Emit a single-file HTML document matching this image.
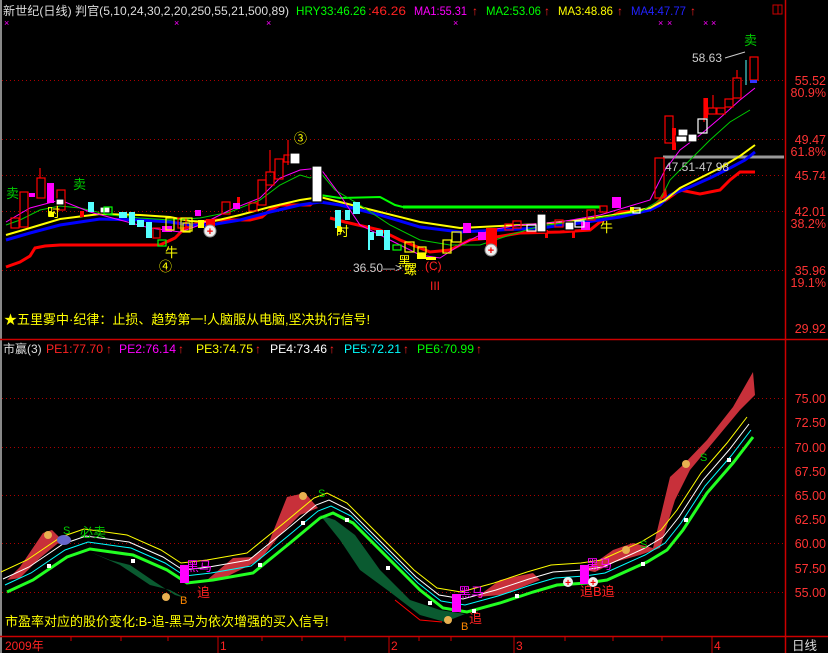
<!DOCTYPE html>
<html><head><meta charset="utf-8"><style>
html,body{margin:0;padding:0;background:#000;width:828px;height:653px;overflow:hidden}
svg{display:block}
text{font-family:"Liberation Sans","Noto Sans CJK SC",sans-serif}
</style></head><body>
<svg width="828" height="653" viewBox="0 0 828 653" xmlns="http://www.w3.org/2000/svg">
<rect width="828" height="653" fill="#000"/>
<rect x="0" y="0" width="2" height="653" fill="#888"/>
<line x1="785.5" y1="0" x2="785.5" y2="653" stroke="#c00" stroke-width="1.5"/>
<line x1="0" y1="339.5" x2="828" y2="339.5" stroke="#c00" stroke-width="1.5"/>
<line x1="0" y1="636.5" x2="828" y2="636.5" stroke="#c00" stroke-width="1.5"/>
<rect x="773" y="5" width="9" height="9" fill="none" stroke="#c00"/><line x1="778" y1="5" x2="778" y2="14" stroke="#c00"/>
<g stroke="#a00" stroke-dasharray="1,3" stroke-width="1">
<line x1="2" y1="80.5" x2="785" y2="80.5"/><line x1="2" y1="139.5" x2="785" y2="139.5"/>
<line x1="2" y1="175.5" x2="785" y2="175.5"/><line x1="2" y1="211.5" x2="785" y2="211.5"/>
<line x1="2" y1="270.5" x2="785" y2="270.5"/>
<line x1="2" y1="398.5" x2="785" y2="398.5"/><line x1="2" y1="447.5" x2="785" y2="447.5"/>
<line x1="2" y1="495.5" x2="785" y2="495.5"/><line x1="2" y1="543.5" x2="785" y2="543.5"/>
<line x1="2" y1="592.5" x2="785" y2="592.5"/>
</g>
<text x="3" y="15" font-size="12" fill="#ddd" textLength="286" lengthAdjust="spacingAndGlyphs">新世纪(日线) 判官(5,10,24,30,2,20,250,55,21,500,89)</text>
<text x="296" y="15" font-size="12" fill="#0f0" textLength="70" lengthAdjust="spacingAndGlyphs">HRY33:46.26</text>
<text x="368" y="15" font-size="12" fill="#f22" textLength="38" lengthAdjust="spacingAndGlyphs">:46.26</text>
<text x="414" y="15" font-size="12" fill="#f0f" textLength="53" lengthAdjust="spacingAndGlyphs">MA1:55.31</text><text x="472" y="15" font-size="12" fill="#f22">↑</text>
<text x="486" y="15" font-size="12" fill="#0f0" textLength="55" lengthAdjust="spacingAndGlyphs">MA2:53.06</text><text x="544" y="15" font-size="12" fill="#f22">↑</text>
<text x="558" y="15" font-size="12" fill="#ff0" textLength="55" lengthAdjust="spacingAndGlyphs">MA3:48.86</text><text x="617" y="15" font-size="12" fill="#f22">↑</text>
<text x="631" y="15" font-size="12" fill="#22f" textLength="55" lengthAdjust="spacingAndGlyphs">MA4:47.77</text><text x="690" y="15" font-size="12" fill="#f22">↑</text>
<g fill="#f0f" font-size="9"><text x="4" y="26">×</text><text x="174" y="26">×</text><text x="266" y="26">×</text><text x="453" y="26">×</text><text x="658" y="26">×</text><text x="667" y="26">×</text><text x="703" y="26">×</text><text x="711" y="26">×</text></g>
<g font-size="12.5" fill="#f33" text-anchor="end">
<text x="826" y="85">55.52</text><text x="826" y="97">80.9%</text>
<text x="826" y="144">49.47</text><text x="826" y="156">61.8%</text>
<text x="826" y="180">45.74</text><text x="826" y="216">42.01</text><text x="826" y="228">38.2%</text>
<text x="826" y="275">35.96</text><text x="826" y="287">19.1%</text><text x="826" y="333">29.92</text>
<text x="826" y="403">75.00</text><text x="826" y="427">72.50</text><text x="826" y="452">70.00</text>
<text x="826" y="476">67.50</text><text x="826" y="500">65.00</text><text x="826" y="524">62.50</text>
<text x="826" y="548">60.00</text><text x="826" y="573">57.50</text><text x="826" y="597">55.00</text>
</g>
<line x1="663" y1="157" x2="784" y2="157" stroke="#999" stroke-width="3"/>
<polyline fill="none" stroke="#f00" stroke-width="3" points="6,267 20,262 30,256 35,248 45,246 60,245 150,245 160,245 175,238 185,228 200,222 215,220 250,220 262,217 270,210 280,205 300,205 310,205 316,200 320,196"/>
<polyline fill="none" stroke="#f00" stroke-width="3" points="330,218 345,222 380,230 400,240 430,252 450,250 470,240 490,238 520,233 560,232 590,230 600,222 620,212 650,210 660,200 665,192 666,200 680,190 700,194 720,190 730,180 740,172 755,172"/>
<polyline fill="none" stroke="#0f0" stroke-width="3" points="403,207 600,207"/>
<polyline fill="none" stroke="#0f0" stroke-width="2" points="320,195 340,198 380,197 395,205 403,207"/>
<polyline fill="none" stroke="#00f" stroke-width="3" points="6,240 30,233 60,225 100,219 140,220 170,222 190,225 210,225 240,220 270,212 300,205 320,202 340,205 380,215 420,227 460,232 500,230 540,228 580,223 620,217 650,210 660,205 670,195 690,187 710,178 730,168 745,160 755,152"/>
<polyline fill="none" stroke="#ff0" stroke-width="2" points="6,235 30,228 60,219 100,214 140,215 170,217 190,221 210,222 240,215 270,207 300,200 320,197 340,202 380,212 420,222 460,228 500,226 540,224 580,220 620,214 650,208 665,200 680,188 700,178 720,168 740,156 755,145"/>
<polyline fill="none" stroke="#0c0" stroke-width="1" points="6,225 20,220 40,210 60,206 80,208 110,215 140,218 170,220 200,218 230,212 260,200 280,185 300,175 310,178 320,172 335,190 360,205 390,225 420,240 450,245 480,245 510,235 540,226 580,221 610,216 640,212 660,200 670,180 690,160 710,140 730,122 750,110"/>
<polyline fill="none" stroke="#f0f" stroke-width="1" points="6,222 30,208 60,200 90,212 120,220 150,228 180,232 200,225 230,210 260,198 280,178 300,170 320,168 340,195 360,225 390,240 420,255 440,258 460,245 490,230 520,225 560,222 600,215 630,206 650,200 665,170 680,150 700,135 720,118 740,100 755,88"/>
<g stroke-width="1.2">
<g fill="none" stroke="#f00">
<rect x="11" y="218" width="8" height="10"/><rect x="20" y="192" width="8" height="35"/><rect x="37" y="178" width="8" height="20"/>
<rect x="57" y="190" width="8" height="20"/><rect x="153" y="228" width="7" height="10"/>
<rect x="178" y="218" width="8" height="10"/><rect x="222" y="202" width="8" height="12"/><rect x="249" y="203" width="8" height="8"/>
<rect x="258" y="180" width="8" height="25"/><rect x="266" y="172" width="8" height="13"/><rect x="275" y="159" width="8" height="20"/><rect x="284" y="155" width="8" height="7"/>
<rect x="505" y="224" width="8" height="6"/><rect x="513" y="221" width="8" height="7"/><rect x="555" y="220" width="8" height="7"/><rect x="587" y="210" width="8" height="10"/><rect x="600" y="206" width="7" height="6"/>
<rect x="655" y="158" width="9" height="40"/><rect x="665" y="116" width="8" height="27"/><rect x="708" y="108" width="8" height="6"/><rect x="717" y="108" width="8" height="6"/><rect x="725" y="99" width="8" height="8"/><rect x="733" y="78" width="8" height="20"/><rect x="750" y="57" width="8" height="23"/>
</g>
<g stroke="#f00"><line x1="40" y1="168" x2="40" y2="178"/><line x1="270" y1="150" x2="270" y2="172"/><line x1="288" y1="140" x2="288" y2="165"/><line x1="704" y1="98" x2="704" y2="122"/><line x1="713" y1="95" x2="713" y2="108"/><line x1="737" y1="70" x2="737" y2="78"/></g>
<g fill="#f00"><rect x="80" y="211" width="4" height="6"/><rect x="237" y="197" width="3" height="10"/><rect x="545" y="230" width="3" height="8"/><rect x="704" y="98" width="4" height="20"/><rect x="486" y="228" width="11" height="20"/><rect x="206" y="219" width="9" height="10"/><rect x="318" y="168" width="3" height="10"/><rect x="572" y="232" width="3" height="6"/><rect x="672" y="128" width="4" height="22"/></g>
<g fill="#f0f"><rect x="47" y="183" width="7" height="20"/><rect x="29" y="193" width="6" height="4"/><rect x="162" y="226" width="10" height="6"/><rect x="195" y="210" width="6" height="6"/><rect x="233" y="203" width="7" height="6"/><rect x="463" y="223" width="8" height="10"/><rect x="478" y="232" width="8" height="8"/><rect x="612" y="197" width="9" height="11"/><rect x="581" y="222" width="9" height="8"/></g>
<g fill="#5ff"><rect x="88" y="202" width="6" height="10"/><rect x="119" y="212" width="8" height="6"/><rect x="129" y="212" width="6" height="13"/><rect x="137" y="220" width="7" height="7"/><rect x="146" y="222" width="6" height="16"/><rect x="335" y="210" width="6" height="18"/><rect x="345" y="210" width="5" height="10"/><rect x="353" y="202" width="7" height="12"/><rect x="368" y="232" width="6" height="8"/><rect x="376" y="230" width="7" height="6"/><rect x="384" y="230" width="6" height="20"/><rect x="368" y="225" width="2" height="25"/></g>
<g fill="#fff" stroke="#000"><rect x="56" y="199" width="8" height="6"/><rect x="100" y="207" width="10" height="6"/><rect x="290" y="153" width="10" height="11"/><rect x="312" y="166" width="10" height="36"/><rect x="537" y="214" width="9" height="18"/><rect x="678" y="129" width="10" height="8"/><rect x="688" y="134" width="9" height="8"/><rect x="676" y="136" width="11" height="6" /><rect x="565" y="222" width="9" height="8"/></g>
<g fill="none" stroke="#fff"><rect x="698" y="119" width="9" height="14"/><rect x="575" y="221" width="9" height="6"/><rect x="527" y="225" width="9" height="6"/><rect x="633" y="208" width="7" height="5"/></g>
<g fill="none" stroke="#ff0"><rect x="405" y="242" width="9" height="10"/><rect x="443" y="240" width="8" height="13"/><rect x="452" y="232" width="9" height="10"/><rect x="418" y="247" width="8" height="6"/><rect x="166" y="218" width="8" height="12"/><rect x="183" y="223" width="7" height="9"/><rect x="181" y="218" width="11" height="13"/></g>
<g fill="#ff0"><rect x="198" y="220" width="6" height="8"/><rect x="417" y="253" width="9" height="6"/><rect x="426" y="257" width="10" height="3"/><rect x="49" y="212" width="5" height="5"/><rect x="337" y="227" width="5" height="5"/><rect x="630" y="207" width="4" height="4"/></g>
<g fill="none" stroke="#0f0"><rect x="104" y="207" width="8" height="7"/><rect x="393" y="245" width="8" height="5"/><rect x="158" y="240" width="8" height="6"/></g>
<rect x="750" y="80" width="7" height="3" fill="#33f"/>
</g>
<circle cx="210" cy="231" r="6" fill="#eee" stroke="#888"/><text x="210" y="235" font-size="11" fill="#e00" text-anchor="middle" font-weight="bold">+</text>
<circle cx="491" cy="250" r="6" fill="#eee" stroke="#888"/><text x="491" y="254" font-size="11" fill="#e00" text-anchor="middle" font-weight="bold">+</text>
<g font-size="13">
<text x="6" y="198" fill="#0c0">卖</text><text x="73" y="189" fill="#0c0">卖</text><text x="744" y="45" fill="#0c0">卖</text>
<text x="47" y="217" fill="#ff0">时</text><text x="336" y="236" fill="#ff0">时</text>
<text x="165" y="257" fill="#ff0">牛</text><text x="600" y="232" fill="#ff0">牛</text>
<text x="398" y="266" fill="#ff0">黑</text><text x="404" y="274" fill="#ff0">螺</text>
<text x="425" y="270" fill="#f22" font-size="12">(C)</text><text x="430" y="290" fill="#f22" font-size="12">III</text>
<text x="159" y="271" fill="#ff0" font-size="13">④</text><text x="294" y="143" fill="#ff0" font-size="13">③</text>
</g>
<text x="353" y="272" font-size="12" fill="#ccc">36.50—&gt;</text>
<text x="692" y="62" font-size="12" fill="#ccc">58.63</text><line x1="725" y1="58" x2="745" y2="52" stroke="#ccc"/>
<line x1="746" y1="60" x2="746" y2="85" stroke="#5ff"/>
<text x="665" y="171" font-size="12" fill="#ccc">47.51-47.98</text>
<text x="4" y="324" font-size="13" fill="#ff0">★五里雾中·纪律：止损、趋势第一!人脑服从电脑,坚决执行信号!</text>
<text x="3" y="353" font-size="12" fill="#ddd">市赢(3)</text>
<text x="46" y="353" font-size="12" fill="#f22" textLength="57" lengthAdjust="spacingAndGlyphs">PE1:77.70</text><text x="106" y="353" font-size="12" fill="#f22">↑</text>
<text x="119" y="353" font-size="12" fill="#f0f" textLength="57" lengthAdjust="spacingAndGlyphs">PE2:76.14</text><text x="178" y="353" font-size="12" fill="#f22">↑</text>
<text x="196" y="353" font-size="12" fill="#ff0" textLength="57" lengthAdjust="spacingAndGlyphs">PE3:74.75</text><text x="255" y="353" font-size="12" fill="#f22">↑</text>
<text x="270" y="353" font-size="12" fill="#fff" textLength="57" lengthAdjust="spacingAndGlyphs">PE4:73.46</text><text x="329" y="353" font-size="12" fill="#f22">↑</text>
<text x="344" y="353" font-size="12" fill="#0ff" textLength="57" lengthAdjust="spacingAndGlyphs">PE5:72.21</text><text x="403" y="353" font-size="12" fill="#f22">↑</text>
<text x="417" y="353" font-size="12" fill="#0f0" textLength="57" lengthAdjust="spacingAndGlyphs">PE6:70.99</text><text x="476" y="353" font-size="12" fill="#f22">↑</text>
<path d="M7,580 L20,567 L43,533 L52,530 L62,540 L40,558 L20,578 Z" fill="#c8303a"/>
<path d="M207,580 L233,558 L253,557 L267,547 L287,497 L305,493 L318,508 L300,515 L280,535 L260,560 L240,570 L220,580 Z" fill="#c8303a"/>
<path d="M477,597 L500,580 L533,573 L540,580 L520,588 L500,595 Z" fill="#c8303a"/>
<path d="M585,570 L613,550 L633,543 L653,548 L670,477 L683,465 L707,440 L733,407 L753,372 L755,395 L740,410 L715,440 L690,470 L675,500 L660,548 L640,555 L615,562 L595,572 Z" fill="#c8303a"/>
<path d="M90,552 L110,560 L130,565 L155,582 L175,595 L185,598 L170,590 L150,585 L120,565 Z" fill="#0a5a30"/>
<path d="M320,515 L340,540 L360,570 L390,592 L420,615 L445,622 L465,614 L440,610 L410,600 L380,570 L355,535 L335,520 Z" fill="#0a5a30"/>
<path d="M395,600 L420,620 L442,622" stroke="#f00" fill="none"/>
<g fill="none">
<path d="M7,592 L33,580 L67,557 L90,549 L133,555 L167,570 L187,583 L213,580 L253,573 L290,543 L320,518 L333,513 L353,523 L400,570 L420,590 L443,608 L467,612 L500,603 L533,592 L557,585 L587,583 L607,580 L647,562 L667,550 L683,530 L707,493 L733,463 L753,437" stroke="#2f2" stroke-width="3"/>
<path d="M7,592 L33,580 L67,557 L90,549 L133,555 L167,570 L187,583 L213,580 L253,573 L290,543 L320,518 L333,513 L353,523 L400,570 L420,590 L443,608 L467,612 L500,603 L533,592 L557,585 L587,583 L607,580 L647,562 L667,550 L683,530 L707,493 L733,463 L753,437" stroke="#0ff" stroke-width="1" transform="translate(-2,-7)"/>
<path d="M7,592 L33,580 L67,557 L90,549 L133,555 L167,570 L187,583 L213,580 L253,573 L290,543 L320,518 L333,513 L353,523 L400,570 L420,590 L443,608 L467,612 L500,603 L533,592 L557,585 L587,583 L607,580 L647,562 L667,550 L683,530 L707,493 L733,463 L753,437" stroke="#fff" stroke-width="1" transform="translate(-4,-13)"/>
<path d="M7,592 L33,580 L67,557 L90,549 L133,555 L167,570 L187,583 L213,580 L253,573 L290,543 L320,518 L333,513 L353,523 L400,570 L420,590 L443,608 L467,612 L500,603 L533,592 L557,585 L587,583 L607,580 L647,562 L667,550 L683,530 L707,493 L733,463 L753,437" stroke="#ff0" stroke-width="1" transform="translate(-6,-20)"/>
</g>
<g fill="#fff"><rect x="47" y="564" width="4" height="4"/><rect x="131" y="559" width="4" height="4"/><rect x="258" y="563" width="4" height="4"/><rect x="301" y="521" width="4" height="4"/><rect x="345" y="518" width="4" height="4"/><rect x="386" y="566" width="4" height="4"/><rect x="428" y="601" width="4" height="4"/><rect x="472" y="609" width="4" height="4"/><rect x="515" y="594" width="4" height="4"/><rect x="641" y="562" width="4" height="4"/><rect x="684" y="518" width="4" height="4"/><rect x="727" y="458" width="4" height="4"/></g>
<rect x="180" y="565" width="9" height="18" fill="#f0f"/><rect x="452" y="594" width="9" height="18" fill="#f0f"/><rect x="580" y="565" width="9" height="19" fill="#f0f"/>
<g font-size="13">
<text x="186" y="571" fill="#f0f">黑马</text><text x="458" y="597" fill="#f0f">黑马</text><text x="586" y="569" fill="#f0f">黑马</text>
<text x="197" y="597" fill="#f22">追</text><text x="469" y="623" fill="#f22">追</text><text x="580" y="596" fill="#f22">追B追</text>
<text x="180" y="604" fill="#f80" font-size="11">B</text><text x="461" y="630" fill="#f80" font-size="11">B</text>
<text x="63" y="534" fill="#0c0" font-size="11">S</text><text x="80" y="537" fill="#0c0">必卖</text>
<text x="318" y="497" fill="#0c0" font-size="11">S</text><text x="640" y="548" fill="#0c0" font-size="11">S</text><text x="700" y="461" fill="#0c0" font-size="11">S</text>
</g>
<g fill="#e8b050"><circle cx="48" cy="535" r="4"/><circle cx="303" cy="496" r="4"/><circle cx="626" cy="550" r="4"/><circle cx="686" cy="464" r="4"/><circle cx="166" cy="597" r="4"/><circle cx="448" cy="620" r="4"/></g>
<ellipse cx="64" cy="540" rx="7" ry="5" fill="#66c"/>
<circle cx="568" cy="582" r="5" fill="#eee"/><text x="568" y="586" font-size="10" fill="#e00" text-anchor="middle" font-weight="bold">+</text>
<circle cx="593" cy="582" r="5" fill="#eee"/><text x="593" y="586" font-size="10" fill="#e00" text-anchor="middle" font-weight="bold">+</text>
<text x="5" y="626" font-size="13" fill="#ff0">市盈率对应的股价变化:B-追-黑马为依次增强的买入信号!</text>
<g stroke="#c00"><line x1="71" y1="637" x2="71" y2="641"/><line x1="121" y1="637" x2="121" y2="641"/><line x1="168" y1="637" x2="168" y2="641"/><line x1="218" y1="637" x2="218" y2="653"/><line x1="262" y1="637" x2="262" y2="641"/><line x1="302" y1="637" x2="302" y2="641"/><line x1="345" y1="637" x2="345" y2="641"/><line x1="389" y1="637" x2="389" y2="653"/><line x1="419" y1="637" x2="419" y2="641"/><line x1="451" y1="637" x2="451" y2="641"/><line x1="514" y1="637" x2="514" y2="653"/><line x1="565" y1="637" x2="565" y2="641"/><line x1="613" y1="637" x2="613" y2="641"/><line x1="662" y1="637" x2="662" y2="641"/><line x1="712" y1="637" x2="712" y2="653"/></g>
<text x="5" y="650" font-size="12" fill="#f22">2009年</text>
<text x="220" y="650" font-size="12" fill="#f22">1</text><text x="391" y="650" font-size="12" fill="#f22">2</text>
<text x="516" y="650" font-size="12" fill="#f22">3</text><text x="714" y="650" font-size="12" fill="#f22">4</text>
<text x="792" y="650" font-size="12.5" fill="#ddd">日线</text>
</svg>
</body></html>
